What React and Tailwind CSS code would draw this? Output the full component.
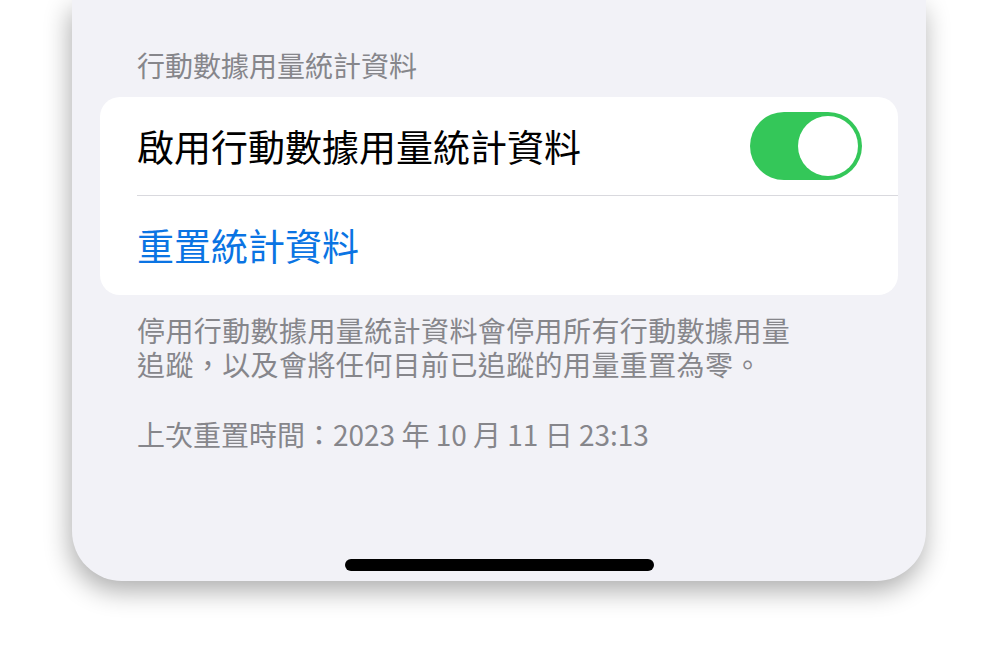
import React from 'react';

const CJK = { fontFamily: '"Noto Sans CJK TC", "Noto Sans", sans-serif' };

const Toggle = () => (
  <div className="flex h-[68px] w-[112px] items-center justify-end rounded-full bg-[#34c759] p-[4px]">
    <div className="h-[60px] w-[60px] rounded-full bg-white" />
  </div>
);

export default function App() {
  return (
    <div className="h-[648px] w-[996px] overflow-hidden bg-white" style={CJK}>
      <div className="ml-[72px] flex h-[581px] w-[854px] flex-col rounded-b-[50px] bg-[#f2f2f7] shadow-[-2px_10px_26px_rgba(0,0,0,0.32)]">
        <p className="pl-[65px] pt-[48px] text-[28px] leading-[34px] text-[#86868b]">行動數據用量統計資料</p>

        <div className="mx-[28px] mt-[15px] rounded-[20px] bg-white">
          <div className="flex h-[98px] items-center justify-between pl-[37px] pr-[36px]">
            <span className="text-[37px] leading-none text-black">啟用行動數據用量統計資料</span>
            <Toggle />
          </div>
          <div className="ml-[37px] h-px bg-[#d9d9de]" />
          <div className="flex h-[99px] items-center pl-[37px]">
            <span className="text-[37px] leading-none text-[#0a74e3]">重置統計資料</span>
          </div>
        </div>

        <p className="mt-[18px] px-[65px] text-[28px] leading-[34px] tracking-[0.4px] text-[#86868b]">
          停用行動數據用量統計資料會停用所有行動數據用量
          <br />
          追蹤，以及會將任何目前已追蹤的用量重置為零。
        </p>

        <p className="mt-[36px] px-[65px] text-[28px] leading-[34px] text-[#86868b]">
          上次重置時間：2023 年 10 月 11 日 23:13
        </p>

        <div className="mb-[10px] mt-auto h-[12px] w-[309px] self-center rounded-full bg-black" />
      </div>
    </div>
  );
}
